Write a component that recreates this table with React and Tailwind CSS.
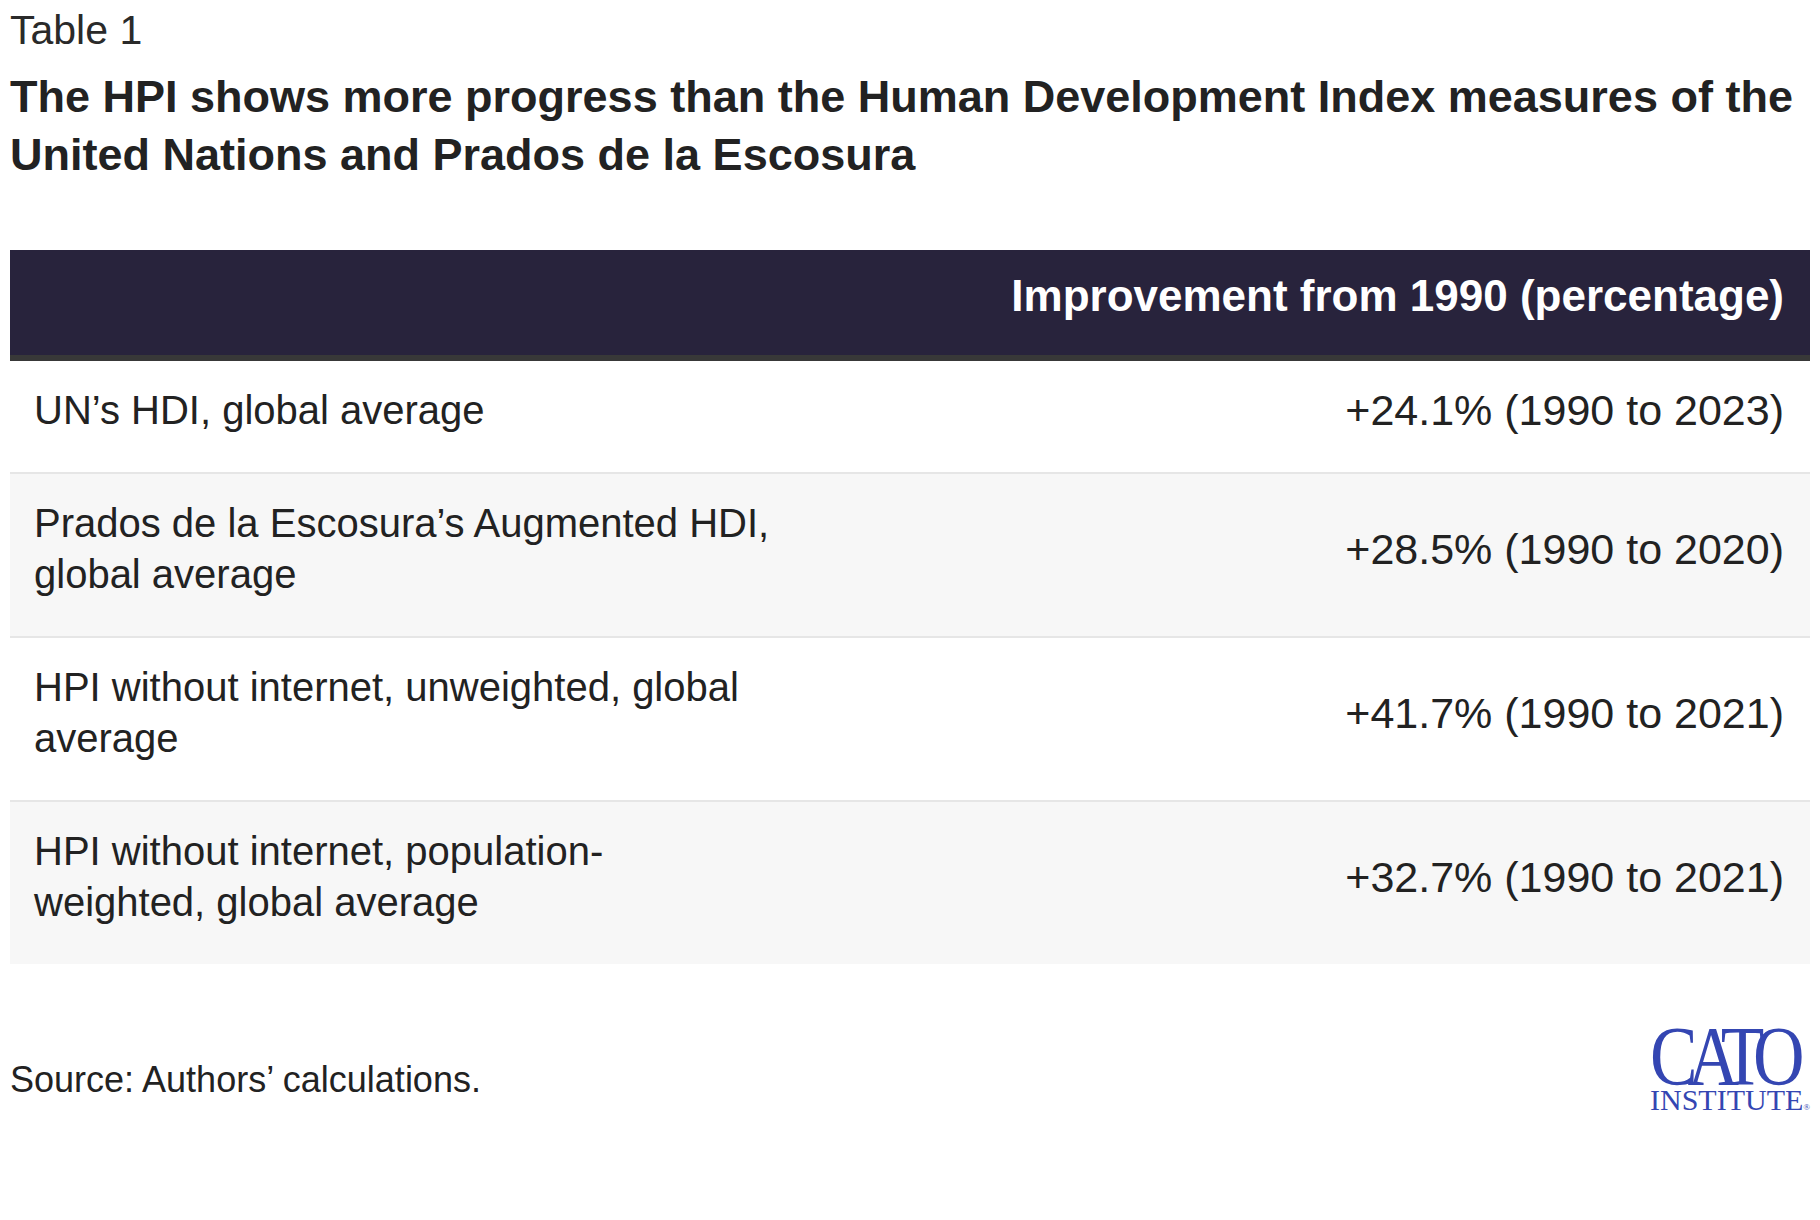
const rows = [
  { label: ["UN’s HDI, global average"], value: "+24.1% (1990 to 2023)", shade: false },
  { label: ["Prados de la Escosura’s Augmented HDI,", "global average"], value: "+28.5% (1990 to 2020)", shade: true },
  { label: ["HPI without internet, unweighted, global", "average"], value: "+41.7% (1990 to 2021)", shade: false },
  { label: ["HPI without internet, population-", "weighted, global average"], value: "+32.7% (1990 to 2021)", shade: true },
]

function CatoLogo() {
  return (
    <div className="mt-[5px] w-[160px] text-[#3446b2] font-['Liberation_Serif','Times_New_Roman',serif]">
      <div className="h-[60px] leading-[60px] text-[84px] whitespace-nowrap">
        <span className="inline-block origin-left scale-x-[0.85] tracking-[-12px]">CATO</span>
      </div>
      <div className="mt-[2px] h-[22px] leading-[22px] text-[30px] whitespace-nowrap">
        INSTITUTE<span className="text-[9px] align-baseline">®</span>
      </div>
    </div>
  )
}

export default function App() {
  return (
    <div className="w-[1820px] h-[1220px] bg-white px-[10px] text-[#222] font-['Liberation_Sans',Arial,sans-serif]">
      <p className="pt-[7px] text-[41px] leading-[46px] text-[#2a2a2a]">Table 1</p>
      <h1 className="mt-[15px] text-[45px] leading-[58px] font-bold">
        The HPI shows more progress than the Human Development Index measures of the
        <br />
        United Nations and Prados de la Escosura
      </h1>

      {/* Table */}
      <div className="mt-[66px]">
        <div className="h-[111px] bg-[#28233c] border-b-[6px] border-[#383838] flex justify-end pt-[21px] pr-[26px]">
          <span className="text-[44px] leading-[50px] font-bold text-white whitespace-nowrap">
            Improvement from 1990 (percentage)
          </span>
        </div>
        {rows.map((r, i) => (
          <div
            key={i}
            className={`flex items-center justify-between pt-[24px] pb-[36px] pl-[24px] pr-[26px] ${
              i > 0 ? 'border-t-2 border-[#e6e6e6]' : ''
            } ${r.shade ? 'bg-[#f7f7f7]' : 'bg-white'}`}
          >
            <div className="text-[40px] leading-[51px] whitespace-nowrap">
              {r.label.map((l, j) => (
                <div key={j}>{l}</div>
              ))}
            </div>
            <div className="text-[43px] leading-[51px] whitespace-nowrap">{r.value}</div>
          </div>
        ))}
      </div>

      {/* Footer */}
      <div className="mt-[58px] flex justify-between items-start">
        <p className="mt-[38px] text-[36px] leading-[40px]">Source: Authors’ calculations.</p>
        <CatoLogo />
      </div>
    </div>
  )
}
